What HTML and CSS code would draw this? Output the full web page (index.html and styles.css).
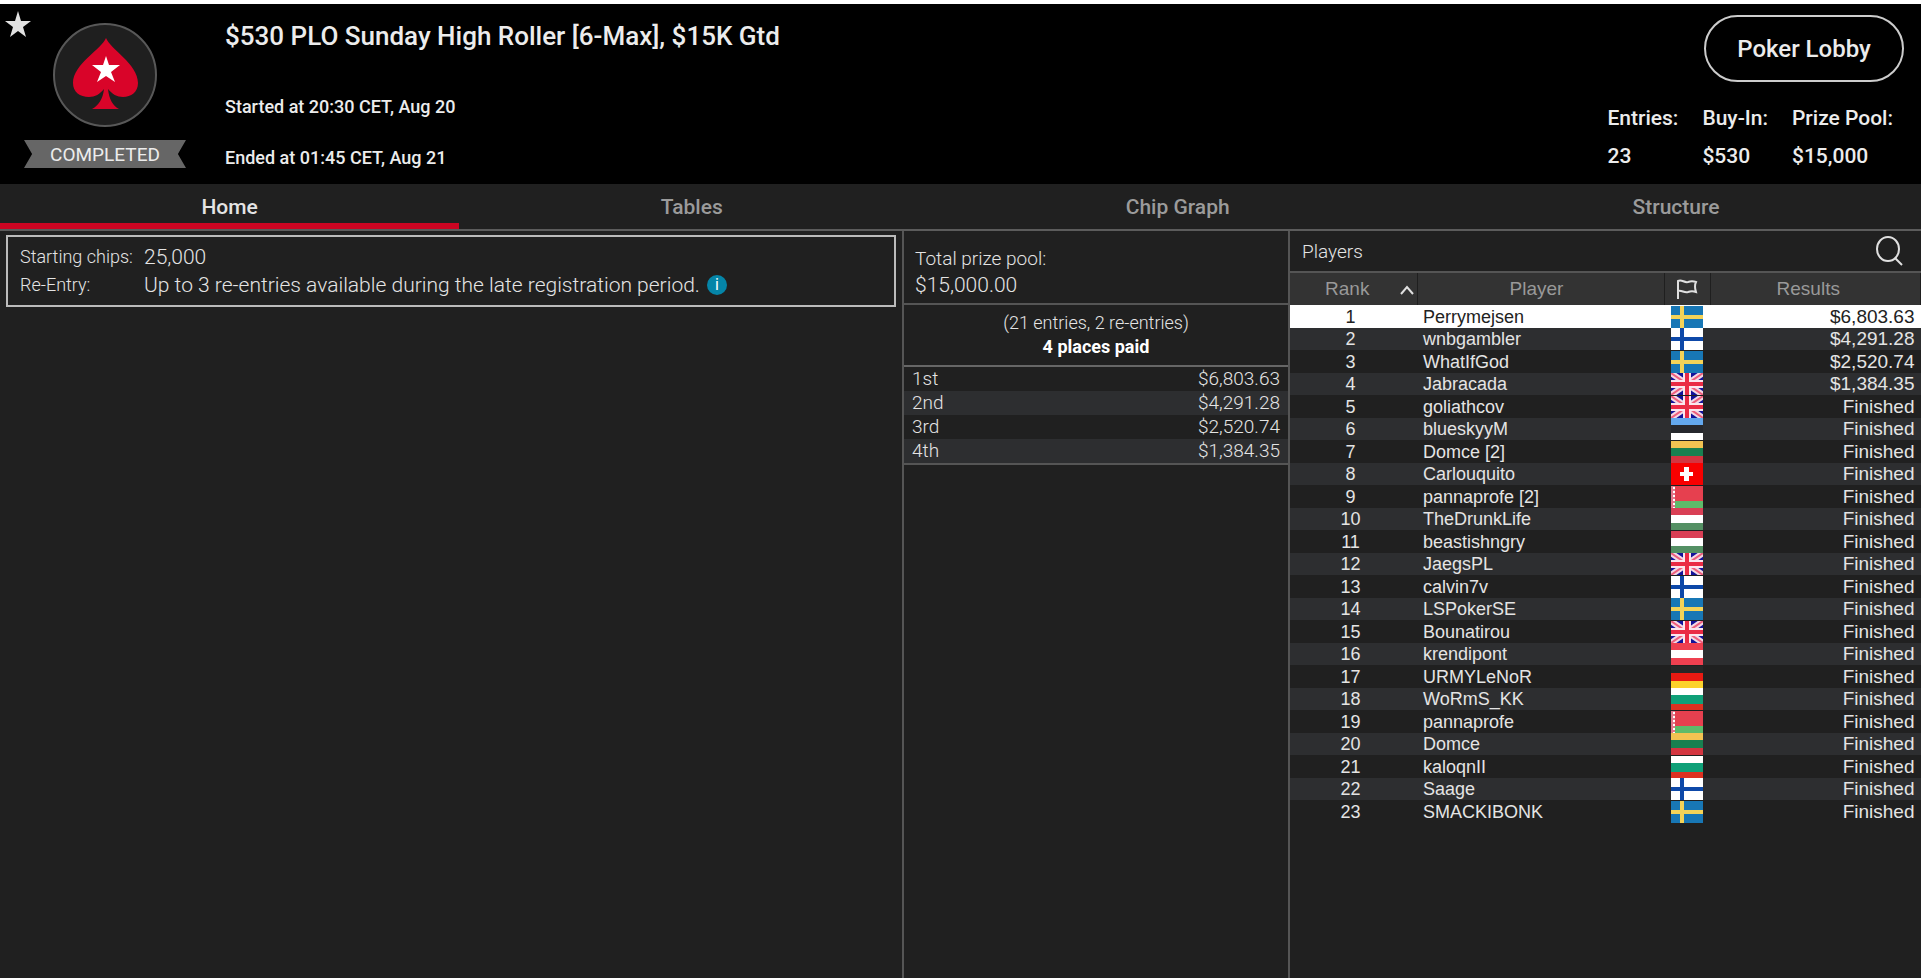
FILE: index.html
```
<!DOCTYPE html>
<html lang="en">
<head>
    <meta charset="UTF-8">
    <meta name="viewport" content="width=device-width, initial-scale=1.0">
    <title>$530 PLO Sunday High Roller [6-Max], $15K Gtd</title>
    <link rel="stylesheet" href="styles.css">
</head>
<body>
    <!-- flags -->
    <svg class="sprites" aria-hidden="true">
        <symbol id="se" viewBox="0 0 32 22" preserveAspectRatio="none">
            <path fill="#1877b5" d="M0 0h32v22H0z"/>
            <path fill="#f4d358" d="M9 0h4v22H9zM0 9h32v4H0z"/>
        </symbol>
        <symbol id="fi" viewBox="0 0 32 22" preserveAspectRatio="none">
            <path fill="#fff" d="M0 0h32v22H0z"/>
            <path fill="#0d48a8" d="M9 0h4v22H9zM0 9h32v4H0z"/>
        </symbol>
        <symbol id="gb" viewBox="0 0 32 22" preserveAspectRatio="none">
            <path fill="#12129a" d="M0 0h32v22H0z"/>
            <path stroke="#f3d9e4" stroke-width="6" d="M0 0l32 22M32 0L0 22"/>
            <path stroke="#ee5f7d" stroke-width="2" d="M0 0l32 22M32 0L0 22"/>
            <path fill="#fbe6ee" d="M12 0h8v22h-8zM0 7h32v8H0z"/>
            <path fill="#ea2b45" d="M14 0h4v22h-4zM0 9h32v4H0z"/>
        </symbol>
        <symbol id="ee" viewBox="0 0 32 22" preserveAspectRatio="none">
            <path fill="#63a8ee" d="M0 0h32v7H0z"/>
            <path fill="#26282d" d="M0 7h32v8H0z"/>
            <path fill="#fff" d="M0 15h32v7H0z"/>
        </symbol>
        <symbol id="lt" viewBox="0 0 32 22" preserveAspectRatio="none">
            <path fill="#f2c352" d="M0 0h32v7H0z"/>
            <path fill="#188050" d="M0 7h32v8H0z"/>
            <path fill="#d33540" d="M0 15h32v7H0z"/>
        </symbol>
        <symbol id="ch" viewBox="0 0 32 22" preserveAspectRatio="none">
            <path fill="#f80000" d="M0 0h32v22H0z"/>
            <path fill="#fff" d="M13 4h5v5h4v4h-4v5h-5v-5H9V9h4z"/>
        </symbol>
        <symbol id="by" viewBox="0 0 32 22" preserveAspectRatio="none">
            <path fill="#e6404f" d="M0 0h32v15H0z"/>
            <path fill="#5dbb6a" d="M0 15h32v7H0z"/>
            <path fill="#e2768a" d="M0 0h4v22H0z"/>
            <path stroke="#fff" stroke-width="2" stroke-dasharray="2 2" d="M3 1v21"/>
        </symbol>
        <symbol id="hu" viewBox="0 0 32 22" preserveAspectRatio="none">
            <path fill="#d93f55" d="M0 0h32v7H0z"/>
            <path fill="#fff" d="M0 7h32v8H0z"/>
            <path fill="#549064" d="M0 15h32v7H0z"/>
        </symbol>
        <symbol id="at" viewBox="0 0 32 22" preserveAspectRatio="none">
            <path fill="#ef4050" d="M0 0h32v22H0z"/>
            <path fill="#fff" d="M0 7h32v8H0z"/>
        </symbol>
        <symbol id="de" viewBox="0 0 32 22" preserveAspectRatio="none">
            <path fill="#272727" d="M0 0h32v7H0z"/>
            <path fill="#e81a12" d="M0 7h32v8H0z"/>
            <path fill="#fcd22c" d="M0 15h32v7H0z"/>
        </symbol>
        <symbol id="bg" viewBox="0 0 32 22" preserveAspectRatio="none">
            <path fill="#fff" d="M0 0h32v7H0z"/>
            <path fill="#0fa078" d="M0 7h32v9H0z"/>
            <path fill="#dd3020" d="M0 16h32v6H0z"/>
        </symbol>
    </svg>

    <header class="header">
        <svg class="favorite" viewBox="0 0 26 26"><path fill="#e2e2e2" d="M13 0l3 10h10l-8 6 3 10-8-6-8 6 3-10-8-6h10z"/></svg>
        <div class="brand">
            <svg class="logo" viewBox="0 0 106 106">
                <circle cx="53" cy="53" r="51" fill="#1f1f1f" stroke="#585858" stroke-width="2"/>
                <path fill="#d90429" d="M54 16C58 27 86 42 86 61c0 9-7 14-15 14-6 0-11-3-15-8 1 10 5 17 11 20H40c6-3 11-10 12-20-4 5-9 8-15 8-9 0-16-5-16-14 0-19 29-34 33-45z"/>
                <path fill="#fff" d="M54 34l3 9h11l-9 7 4 10-9-6-9 6 4-10-9-7h11z"/>
            </svg>
            <div class="status">COMPLETED</div>
        </div>
        <div class="details">
            <h1>$530 PLO Sunday High Roller [6-Max], $15K Gtd</h1>
            <p>Started at 20:30 CET, Aug 20</p>
            <p>Ended at 01:45 CET, Aug 21</p>
        </div>
        <div class="summary">
            <button class="lobby">Poker Lobby</button>
            <dl class="stats">
                <div><dt>Entries:</dt><dd>23</dd></div>
                <div><dt>Buy-In:</dt><dd>$530</dd></div>
                <div><dt>Prize Pool:</dt><dd>$15,000</dd></div>
            </dl>
        </div>
    </header>

    <nav class="tabs">
        <a class="active" href="#home">Home</a>
        <a href="#tables">Tables</a>
        <a href="#chips">Chip Graph</a>
        <a href="#structure">Structure</a>
    </nav>

    <main class="content">
        <section class="home">
            <dl class="info">
                <dt>Starting chips:</dt>
                <dd>25,000</dd>
                <dt>Re-Entry:</dt>
                <dd>Up to 3 re-entries available during the late registration period. <span class="tip">i</span></dd>
            </dl>
        </section>

        <section class="prizes">
            <div class="pool">
                <div>Total prize pool:</div>
                <div class="amount">$15,000.00</div>
            </div>
            <div class="places">
                <div>(21 entries, 2 re-entries)</div>
                <strong>4 places paid</strong>
            </div>
            <table class="payouts">
                <tr><td>1st</td><td>$6,803.63</td></tr>
                <tr><td>2nd</td><td>$4,291.28</td></tr>
                <tr><td>3rd</td><td>$2,520.74</td></tr>
                <tr><td>4th</td><td>$1,384.35</td></tr>
            </table>
        </section>

        <section class="players">
            <div class="players-bar">
                <h2>Players</h2>
                <button class="search" aria-label="Search players">
                    <svg viewBox="0 0 28 30"><ellipse cx="13" cy="13" rx="11" ry="12"/><path d="M20 22l7 7"/></svg>
                </button>
            </div>
            <table class="ranking">
                <thead>
                    <tr>
                        <th class="rank">Rank <svg class="sort" viewBox="0 0 14 10"><path d="M1 9l6-7 6 7"/></svg></th>
                        <th class="name">Player</th>
                        <th class="country"><svg class="flag-icon" viewBox="0 0 22 20"><path d="M2 20V2c4-2 6 2 10 1 3-1 5-1 8 0-2 4-1 6 0 10-3-1-5-1-8 0-4 1-6-2-10-1"/></svg></th>
                        <th class="result">Results</th>
                    </tr>
                </thead>
                <tbody>
                    <tr class="selected"><td>1</td><td>Perrymejsen</td><td><svg class="flag"><use href="#se"/></svg></td><td>$6,803.63</td></tr>
                    <tr><td>2</td><td>wnbgambler</td><td><svg class="flag"><use href="#fi"/></svg></td><td>$4,291.28</td></tr>
                    <tr><td>3</td><td>WhatIfGod</td><td><svg class="flag"><use href="#se"/></svg></td><td>$2,520.74</td></tr>
                    <tr><td>4</td><td>Jabracada</td><td><svg class="flag"><use href="#gb"/></svg></td><td>$1,384.35</td></tr>
                    <tr><td>5</td><td>goliathcov</td><td><svg class="flag"><use href="#gb"/></svg></td><td>Finished</td></tr>
                    <tr><td>6</td><td>blueskyyM</td><td><svg class="flag"><use href="#ee"/></svg></td><td>Finished</td></tr>
                    <tr><td>7</td><td>Domce [2]</td><td><svg class="flag"><use href="#lt"/></svg></td><td>Finished</td></tr>
                    <tr><td>8</td><td>Carlouquito</td><td><svg class="flag"><use href="#ch"/></svg></td><td>Finished</td></tr>
                    <tr><td>9</td><td>pannaprofe [2]</td><td><svg class="flag"><use href="#by"/></svg></td><td>Finished</td></tr>
                    <tr><td>10</td><td>TheDrunkLife</td><td><svg class="flag"><use href="#hu"/></svg></td><td>Finished</td></tr>
                    <tr><td>11</td><td>beastishngry</td><td><svg class="flag"><use href="#hu"/></svg></td><td>Finished</td></tr>
                    <tr><td>12</td><td>JaegsPL</td><td><svg class="flag"><use href="#gb"/></svg></td><td>Finished</td></tr>
                    <tr><td>13</td><td>calvin7v</td><td><svg class="flag"><use href="#fi"/></svg></td><td>Finished</td></tr>
                    <tr><td>14</td><td>LSPokerSE</td><td><svg class="flag"><use href="#se"/></svg></td><td>Finished</td></tr>
                    <tr><td>15</td><td>Bounatirou</td><td><svg class="flag"><use href="#gb"/></svg></td><td>Finished</td></tr>
                    <tr><td>16</td><td>krendipont</td><td><svg class="flag"><use href="#at"/></svg></td><td>Finished</td></tr>
                    <tr><td>17</td><td>URMYLeNoR</td><td><svg class="flag"><use href="#de"/></svg></td><td>Finished</td></tr>
                    <tr><td>18</td><td>WoRmS_KK</td><td><svg class="flag"><use href="#bg"/></svg></td><td>Finished</td></tr>
                    <tr><td>19</td><td>pannaprofe</td><td><svg class="flag"><use href="#by"/></svg></td><td>Finished</td></tr>
                    <tr><td>20</td><td>Domce</td><td><svg class="flag"><use href="#lt"/></svg></td><td>Finished</td></tr>
                    <tr><td>21</td><td>kaloqnII</td><td><svg class="flag"><use href="#bg"/></svg></td><td>Finished</td></tr>
                    <tr><td>22</td><td>Saage</td><td><svg class="flag"><use href="#fi"/></svg></td><td>Finished</td></tr>
                    <tr><td>23</td><td>SMACKIBONK</td><td><svg class="flag"><use href="#se"/></svg></td><td>Finished</td></tr>
                </tbody>
            </table>
        </section>
    </main>
</body>
</html>
```
FILE: styles.css
```
* {
    box-sizing: border-box;
}
body {
    margin: 0;
    min-height: 100vh;
    display: flex;
    flex-direction: column;
    background: #202020;
    color: #e4e4e4;
    font-family: Roboto, sans-serif;
    font-size: 19px;
    font-weight: 300;
}
h1, h2, p, dl, dd {
    margin: 0;
}
.sprites {
    position: absolute;
    width: 0;
    height: 0;
}

/* header */
.header {
    position: relative;
    display: flex;
    border-top: 4px solid #fff;
    background: #000;
    color: #ececec;
    font-weight: 500;
}
.favorite {
    position: absolute;
    left: 5px;
    top: 7px;
    width: 26px;
    height: 26px;
}
.brand {
    display: flex;
    flex-direction: column;
    align-items: center;
    gap: 12px;
    padding: 18px 39px 16px 24px;
}
.logo {
    width: 106px;
    height: 106px;
}
.status {
    width: 162px;
    background: #666;
    clip-path: polygon(0 0, 100% 0, 95% 50%, 100% 100%, 0 100%, 5% 50%);
    font-size: 19px;
    font-weight: 400;
    line-height: 29px;
    height: 28px;
    text-align: center;
}
.details {
    flex: 1;
    padding-top: 16px;
}
.details h1 {
    margin-bottom: 41px;
    font-size: 26px;
    font-weight: 500;
    line-height: 32px;
}
.details p {
    font-size: 18px;
    line-height: 28px;
}
.details p + p {
    margin-top: 23px;
}
.summary {
    display: flex;
    flex-direction: column;
    align-items: flex-end;
    padding: 11px 17px 0 0;
}
.lobby {
    width: 200px;
    height: 67px;
    border: 2px solid #ccc;
    border-radius: 34px;
    background: #000;
    color: #ececec;
    font: 500 24px Roboto, sans-serif;
    cursor: pointer;
}
.stats {
    display: flex;
    gap: 24px;
    margin-top: 17px;
    padding-right: 11px;
    font-size: 21px;
    line-height: 38px;
}

/* tabs */
.tabs {
    display: flex;
    border-bottom: 2px solid #5c5c5c;
}
.tabs a {
    flex: 1 1 auto;
    height: 45px;
    color: #9b9b9b;
    font-size: 21px;
    font-weight: 500;
    line-height: 46px;
    text-align: center;
    text-decoration: none;
}
.tabs .active {
    border-bottom: 6px solid #cc0522;
    color: #e4e4e4;
}

/* content */
.content {
    flex: 1;
    display: grid;
    grid-template-columns: 902fr 386fr 633fr;
}
.home {
    padding: 4px 6px;
}
.info {
    display: grid;
    grid-template-columns: 124px 1fr;
    padding: 6px 12px;
    border: 2px solid #bbb;
    font-size: 18px;
    line-height: 28px;
}
.info dd {
    font-size: 21px;
}
.tip {
    display: inline-block;
    width: 20px;
    margin-left: 2px;
    border-radius: 50%;
    background: #0585a8;
    color: #fff;
    font-size: 16px;
    font-weight: 400;
    line-height: 20px;
    text-align: center;
    vertical-align: 2px;
}
.prizes {
    border-left: 2px solid #555;
}
.pool {
    padding: 14px 11px 4px;
    border-bottom: 2px solid #555;
    line-height: 27px;
}
.amount {
    font-size: 21px;
}
.places {
    padding: 6px 0;
    border-bottom: 2px solid #666;
    line-height: 24px;
    text-align: center;
    font-size: 18px;
}
.places strong {
    color: #fff;
    font-weight: 700;
}
table {
    width: 100%;
    border-collapse: collapse;
}
td, th {
    padding: 0;
}
.payouts {
    border-bottom: 2px solid #555;
    font-size: 19px;
    line-height: 24px;
}
.payouts td:first-child {
    padding-left: 8px;
}
.payouts td:last-child {
    padding-right: 8px;
    text-align: right;
}
.payouts tr:nth-child(even), .ranking tbody tr:nth-child(even) {
    background: #2d2e30;
}
.players {
    border-left: 2px solid #555;
}
.players-bar {
    display: flex;
    align-items: center;
    justify-content: space-between;
    height: 42px;
    padding: 0 18px 0 12px;
    border-bottom: 2px solid #555;
}
.players-bar h2 {
    font-size: 19px;
    font-weight: 300;
}
.search {
    display: flex;
    width: 28px;
    height: 30px;
    padding: 0;
    border: none;
    background: none;
    cursor: pointer;
}
.search svg, .sort, .flag-icon {
    fill: none;
    stroke: #e0e0e0;
    stroke-width: 2;
}
.ranking {
    table-layout: fixed;
    font-family: "Liberation Sans", Arial, sans-serif;
    font-size: 18px;
    font-weight: 400;
    line-height: 22px;
}
.ranking th {
    height: 32px;
    border-right: 1px solid #1f1f1f;
    background: #333;
    color: #999;
    font-size: 19px;
    font-weight: 400;
}
.ranking .rank {
    position: relative;
    width: 127px;
    padding-right: 12px;
}
.ranking .name {
    width: 247px;
    padding-right: 8px;
}
.ranking .country {
    width: 46px;
}
.ranking .result {
    padding-right: 14px;
}
.sort {
    position: absolute;
    right: 3px;
    top: 12px;
    width: 14px;
    height: 10px;
}
.flag-icon {
    display: block;
    width: 22px;
    height: 20px;
    margin: 0 auto;
}
.ranking tbody tr {
    height: 23px;
}
.ranking tbody tr:nth-child(even) {
    height: 22px;
}
.ranking tbody .selected {
    background: #fff;
    color: #222;
}
.ranking td:first-child {
    padding-right: 6px;
    text-align: center;
}
.ranking td:nth-child(2) {
    padding-left: 6px;
}
.ranking td:last-child {
    padding-right: 6px;
    font-size: 19px;
    text-align: right;
}
.flag {
    display: block;
    width: 32px;
    height: 22px;
    margin: 0 auto;
}
```
